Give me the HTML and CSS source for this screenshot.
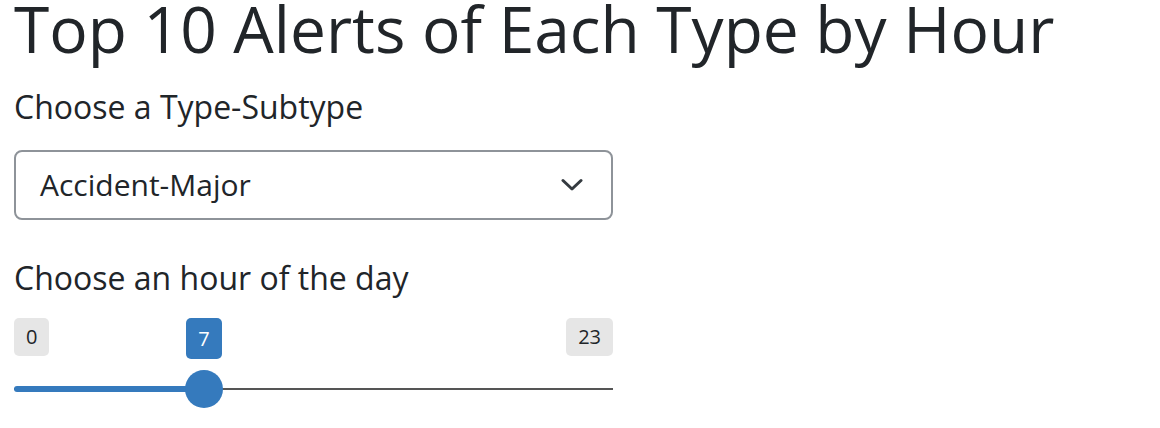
FILE: index.html
```html
<!DOCTYPE html>
<html lang="en">
<head>
<meta charset="utf-8">
<title>Top 10 Alerts</title>
<link rel="stylesheet" href="styles.css">
</head>
<body>
<div class="page">
  <h1 class="title">Top 10 Alerts of Each Type by Hour</h1>
  <div class="form-group">
    <label class="control-label">Choose a Type-Subtype</label>
    <div class="select">
      <span class="select-value">Accident-Major</span>
      <svg class="chevron" width="22" height="14" viewBox="0 0 22 14" aria-hidden="true">
        <path d="M2 2.5 L11 11 L20 2.5" fill="none" stroke="#343a40" stroke-width="3" stroke-linecap="round" stroke-linejoin="round"/>
      </svg>
    </div>
  </div>
  <div class="form-group slider-group">
    <label class="control-label">Choose an hour of the day</label>
    <div class="irs">
      <div class="irs-labels">
        <span class="irs-minmax">0</span>
        <span class="irs-minmax">23</span>
      </div>
      <span class="irs-single" style="left: 172px;">7</span>
      <div class="irs-line">
        <div class="irs-bar" style="width: 190px;"></div>
        <div class="irs-handle" style="left: 171px;"></div>
      </div>
    </div>
  </div>
</div>
</body>
</html>
```

FILE: styles.css
```css
html, body {
  margin: 0;
  padding: 0;
  background: #ffffff;
}

body {
  font-family: "Open Sans", "Liberation Sans", sans-serif;
  color: #212529;
}

.page {
  padding: 0 14px;
}

.title {
  margin: 0;
  font-size: 64px;
  font-weight: 400;
  line-height: 58px;
  letter-spacing: 0;
  white-space: nowrap;
}

.form-group {
  width: 599px;
}

.control-label {
  display: block;
  font-size: 32px;
  line-height: 48px;
  margin-top: 25px;
}

.select {
  box-sizing: border-box;
  margin-top: 19px;
  height: 70px;
  border: 2px solid #8e9399;
  border-radius: 8px;
  display: flex;
  align-items: center;
  justify-content: space-between;
  padding: 0 28px 0 24px;
}

.select-value {
  font-size: 30px;
  line-height: 40px;
}

.chevron {
  display: block;
}

.slider-group .control-label {
  margin-top: 34px;
}

.irs {
  position: relative;
  margin-top: 16px;
  height: 100px;
}

.irs-labels {
  display: flex;
  justify-content: space-between;
}

.irs-minmax,
.irs-single {
  box-sizing: border-box;
  height: 38px;
  min-width: 35px;
  padding: 0 12px;
  border-radius: 5px;
  font-size: 20px;
  line-height: 38px;
  text-align: center;
}

.irs-minmax {
  background: #e6e6e6;
  color: #212529;
}

.irs-single {
  position: absolute;
  top: 0;
  width: 36px;
  height: 41px;
  padding: 0;
  line-height: 41px;
  background: #357abd;
  color: #ffffff;
}

.irs-line {
  position: relative;
  margin-top: 32px;
  height: 2px;
  background: #555555;
}

.irs-bar {
  position: absolute;
  left: 0;
  top: -2px;
  height: 6px;
  border-radius: 3px 0 0 3px;
  background: #357abd;
}

.irs-handle {
  position: absolute;
  top: -18px;
  width: 38px;
  height: 38px;
  border-radius: 50%;
  background: #357abd;
}
```
